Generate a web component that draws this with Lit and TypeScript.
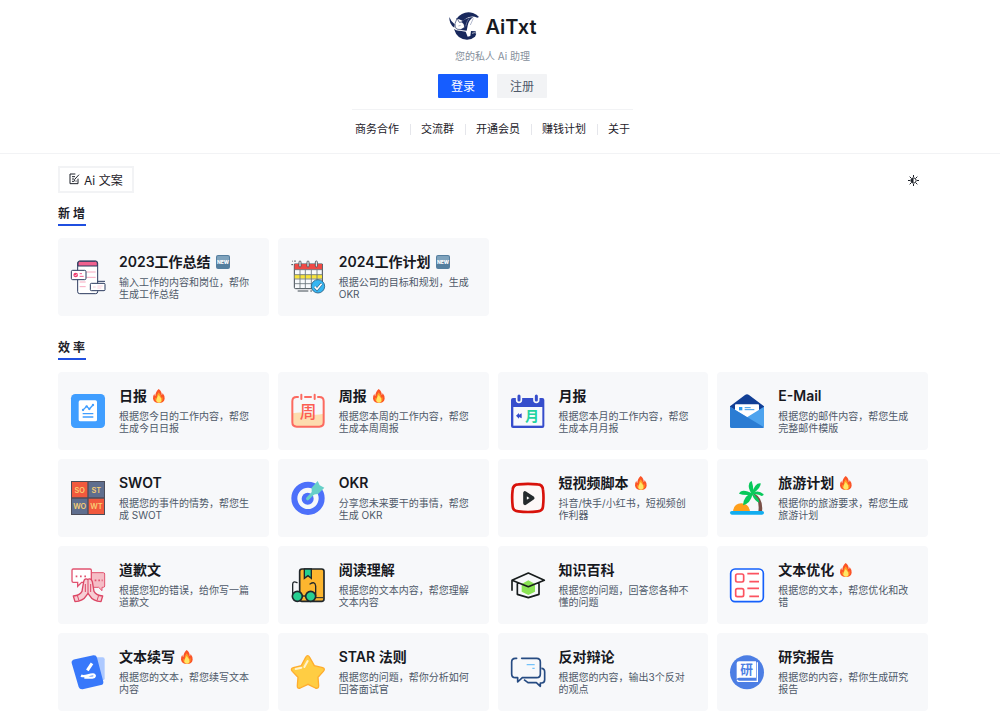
import { LitElement, html, css, svg, nothing } from "lit";
import { customElement, property } from "lit/decorators.js";

type Badge = "new" | "hot" | undefined;
interface Tool {
  icon: string;
  title: string;
  text: string;
  badge?: Badge;
}
interface Section {
  name: string;
  tools: Tool[];
}

const icons: Record<string, unknown> = {
  summary: svg`
    <rect x="20" y="3" width="60" height="98" rx="6" fill="#fff" stroke="#2b3a5e" stroke-width="3"/>
    <path d="M21 18V9q0-5 5-5h48q5 0 5 5v9z" fill="#f0618f" stroke="#2b3a5e" stroke-width="3"/>
    <path d="M46 36h28M46 52h28M26 80h18M26 66h18" stroke="#f8a9c0" stroke-width="3"/>
    <path d="M80 64h22" stroke="#2b3a5e" stroke-width="3"/>
    <rect x="1" y="31" width="44" height="28" rx="4" fill="#fff" stroke="#2b3a5e" stroke-width="3"/>
    <circle cx="14" cy="45" r="7" fill="#ee3f72"/>
    <path d="M11 45l2.500 3 5-6" stroke="#fff" stroke-width="2" fill="none"/>
    <path d="M26 41h7M26 49h12" stroke="#f0618f" stroke-width="3"/>
    <rect x="58" y="70" width="44" height="22" rx="3" fill="#fff" stroke="#2b3a5e" stroke-width="3"/>
    <path d="M66 81h8M79 78h16M79 84h12" stroke="#f8b7ca" stroke-width="2"/>`,
  plan: svg`
    <path d="M10 12h84v70q0 4-4 4H14q-4 0-4-4z" fill="#f8fafc" stroke="#414a52" stroke-width="3"/>
    <path d="M11 12h82v17H11z" fill="#ef4a45"/>
    <path d="M11 44h82v12H11z" fill="#f8e43b"/>
    <path d="M10 29h84M10 44h84M10 57h84M10 71h84M27 29v56M43 29v56M61 29v56M78 29v56" stroke="#69737a" stroke-width="2.500" fill="none"/>
    <g fill="#f8fafc" stroke="#414a52" stroke-width="2.500"><rect x="24" y="3" width="6" height="18" rx="3"/><rect x="48" y="3" width="6" height="18" rx="3"/><rect x="73" y="3" width="6" height="18" rx="3"/></g>
    <path d="M1 14h5M12 1v5M4 3l2 2M20 93h32M58 93h5" stroke="#414a52" stroke-width="3"/>
    <circle cx="81" cy="79" r="20" fill="#35b6f2" stroke="#2c5e80" stroke-width="2.500"/>
    <path d="M71 80l7 8 14-17" fill="none" stroke="#2c5e80" stroke-width="8"/>
    <path d="M71 80l7 8 14-17" fill="none" stroke="#fff" stroke-width="5"/>`,
  daily: svg`
    <rect width="102" height="102" rx="13" fill="#409eff"/>
    <rect x="23" y="19" width="55" height="63" rx="5" fill="#fff"/>
    <path d="M36 48l11-11 8 8 11-12" fill="none" stroke="#409eff" stroke-width="4"/>
    <g fill="#409eff"><circle cx="36" cy="48" r="3.500"/><circle cx="47" cy="37" r="3.500"/><circle cx="55" cy="45" r="3.500"/><circle cx="66" cy="33" r="3.500"/></g>
    <path d="M35 59h32M35 69h32" stroke="#409eff" stroke-width="4"/>`,
  weekly: svg`
    <path d="M5 58q24-5 46 1 22 6 46 0v27q0 12-12 12H17Q5 98 5 86z" fill="#fddcae"/>
    <path d="M21 9h-4Q4 9 4 22v63q0 13 13 13h68q13 0 13-13V22Q98 9 85 9h-4M42 9h18" fill="none" stroke="#fc6a60" stroke-width="6" stroke-linecap="round"/>
    <path d="M31 2v13M71 2v13" stroke="#fc6a60" stroke-width="6" stroke-linecap="round"/>
    <text x="51" y="73" text-anchor="middle" font-size="50" font-weight="500" fill="#fc5d52">周</text>`,
  monthly: svg`
    <path d="M6 12h88q6 0 6 6v78q0 6-6 6H6q-6 0-6-6V18q0-6 6-6z" fill="#364dcc"/>
    <path d="M7 39h87v56H7z" fill="#f8f9fc"/>
    <g fill="#364dcc" stroke="#f7f8fa" stroke-width="5"><rect x="17" y="-1" width="14" height="26" rx="7"/><rect x="69" y="-1" width="14" height="26" rx="7"/></g>
    <path d="M15 65l9-8v5l8-4v15l-8-4v5z" fill="#364dcc"/>
    <text x="63" y="81" text-anchor="middle" font-size="42" font-weight="600" fill="#23d3a0">月</text>`,
  mail: svg`
    <path d="M0 37L45 3q6-5 12 0l45 34v20H0z" fill="#123f96"/>
    <path d="M15 34q0-3 3-3h66q3 0 3 3v50H15z" fill="#fff"/>
    <path d="M0 38l51 32 51-32v59q0 5-5 5H5q-5 0-5-5z" fill="#4da3ee"/>
    <path d="M0 38l102 62q-2 2-5 2H5q-5 0-5-5z" fill="#2b7cd3"/>
    <rect x="27" y="39" width="10" height="10" fill="#2b9af0"/>
    <path d="M44 41h18M44 47h29" stroke="#3b9bea" stroke-width="3"/>`,
  swot: svg`
    <rect width="102" height="102" fill="#4c4d59"/>
    <path d="M3 3h46v46H3zM53 53h46v46H53z" fill="#f1593d"/>
    <path d="M53 3h46v46H53zM3 53h46v46H3z" fill="#5f6e8e"/>
    <g font-size="22" font-weight="600" fill="#f9cf73" text-anchor="middle"><text x="26" y="35">SO</text><text x="76" y="35">ST</text><text x="26" y="84">WO</text><text x="76" y="84">WT</text></g>`,
  okr: svg`
    <circle cx="51" cy="52" r="41" fill="none" stroke="#4d70fa" stroke-width="18"/>
    <circle cx="50" cy="53" r="18" fill="#4d70fa"/>
    <path d="M50 53l27-27" stroke="#67d0c8" stroke-width="10" stroke-linecap="round"/>
    <path d="M62 20L80 0l6 13 14 7-19 19-19 2z" fill="#67d0c8"/>`,
  video: svg`
    <path d="M22 10q29-3 58 0 15 1 16 16 3 24 0 50-1 14-16 15-29 4-58 0Q6 90 5 76q-3-26 0-50Q6 11 22 10z" fill="#fdf8f8" stroke="#d8120b" stroke-width="8"/>
    <path d="M42 36v31l23-16z" fill="#fff" stroke="#252a2d" stroke-width="11" stroke-linejoin="round"/>`,
  palm: svg`
    <path d="M9 91q3-24 25-24t26 24z" fill="#ff9f1c"/>
    <path d="M69 38q21 18 16 54h11q5-39-24-55z" fill="#795047"/>
    <g fill="#08c95b"><path d="M66 40Q52 22 58 6q3-5 7-6 6 16 5 34z"/><path d="M66 36Q75 5 92 7q2 12-23 31z"/><path d="M65 38Q84 24 101 40q-1 5-6 5-12-8-29-4z"/><path d="M69 38Q34 20 27 38q14 6 42 3z"/><path d="M66 36Q41 43 39 73q22-5 29-33z"/><path d="M65 37q24 14 23 28-13-4-22-24z"/></g>
    <rect x="0" y="90" width="102" height="11" rx="5.500" fill="#12adef"/>`,
  sorry: svg`
    <path d="M61 14h36q4 0 4 4v36q0 4-4 4h-4v10l-10-10H61z" fill="#f5bdc6" stroke="#e15370" stroke-width="3"/>
    <path d="M7 3h50q4 0 4 4v32q0 4-4 4H32L20 55V43H7q-4 0-4-4V7q0-4 4-4z" fill="#fff" stroke="#e15370" stroke-width="4"/>
    <path d="M14 25h5M27 25h5M40 25h5M71 37h5M82 37h5M92 37h3" stroke="#e15370" stroke-width="5"/>
    <path d="M50 34q-9-5-12 7L33 70q-7 12-26 14l5 17q24-1 34-18l5-7 5 7q10 17 34 18l5-17q-19-2-26-14l-5-29q-4-12-14-7z" fill="#f7cdd4" stroke="#dc4765" stroke-width="4" stroke-linejoin="round"/>
    <path d="M51 36v40M43 48v24M59 48v24" stroke="#dc4765" stroke-width="3"/>
    <path d="M19 82l5 16M83 82l-5 16" stroke="#dc4765" stroke-width="3"/>`,
  book: svg`
    <rect x="26" y="3" width="73" height="97" rx="7" fill="#fdb62f" stroke="#20272b" stroke-width="5"/>
    <path d="M70 89h27" stroke="#20272b" stroke-width="3"/>
    <path d="M40 3h21v28l-10-8-11 8z" fill="#27cf91" stroke="#20272b" stroke-width="4"/>
    <path d="M5 80V49q0-11 13-5M57 48q15-10 17 6v30" fill="none" stroke="#20272b" stroke-width="4" stroke-linecap="round"/>
    <path d="M31 84h16" stroke="#20272b" stroke-width="4"/>
    <circle cx="19" cy="85" r="15" fill="#27cf91" stroke="#20272b" stroke-width="5"/>
    <circle cx="59" cy="85" r="15" fill="#27cf91" stroke="#20272b" stroke-width="5"/>`,
  cap: svg`
    <path d="M32 48l20-11 20 11v23L52 81 32 71z" fill="#8be354"/>
    <path d="M3 37l49-22 48 22-48 19zM19 46v33l33 10 32-10V46M3 37v31" fill="none" stroke="#171c1c" stroke-width="5" stroke-linejoin="round"/>`,
  list: svg`
    <rect x="2" y="3" width="98" height="98" rx="13" fill="#fff" stroke="#1560fb" stroke-width="5"/>
    <g fill="#fff" stroke="#fc5360" stroke-width="5"><rect x="17" y="18" width="24" height="24" rx="5"/><rect x="17" y="62" width="24" height="24" rx="5"/></g>
    <path d="M52 17h35M58 41h29M52 61h35M58 85h29" stroke="#fc5360" stroke-width="5"/>`,
  write: svg`
    <rect x="69" y="7" width="32" height="69" rx="6" fill="#adc9ff"/>
    <path d="M12 13L67 1q9-1 11 7l19 72q1 8-7 10L35 103q-9 1-12-7L2 24Q0 16 12 13z" fill="#3878fa"/>
    <path d="M63 25L49 46" stroke="#fff" stroke-width="9"/>
    <path d="M30 62c12 6 24-5 36-4 8 1 7 9-2 10H40" fill="none" stroke="#fff" stroke-width="7"/>`,
  star: svg`
    <path d="M44 7q6-10 12 0l14 25 25 6q9 3 2 11L81 67l2 25q0 10-10 7L51 88 28 99q-10 3-9-7l2-25L4 49q-7-8 3-11l24-6z" fill="#ffcd43" stroke="#ffad2e" stroke-width="4"/>
    <path d="M50 18l-10 18M31 38l-17 4" stroke="#fff3cd" stroke-width="6" stroke-linecap="round"/>`,
  chat: svg`
    <path d="M17 10h-4Q2 10 2 21v36q0 11 11 11h7v13l14-13h43q11 0 11-11V21Q88 10 77 10H32" fill="none" stroke="#264b82" stroke-width="5" stroke-linejoin="round" stroke-linecap="round"/>
    <path d="M91 40q10 0 10 11v23q0 9-9 10h-4v10L76 83H51L39 74" fill="none" stroke="#264b82" stroke-width="5" stroke-linejoin="round"/>
    <path d="M47 29h24M64 40h7" stroke="#74c2fa" stroke-width="4"/>`,
  research: svg`
    <circle cx="51" cy="52" r="51" fill="#4c7ee4"/>
    <path d="M31 19h47v49H28q-5 0-8 4V25q0-6 7-6z" fill="#fff"/>
    <path d="M82 22v57H28q-6 0-6-5" fill="none" stroke="#fff" stroke-width="4"/>
    <text x="50" y="57" text-anchor="middle" font-size="38" font-weight="600" fill="#4c7ee4">研</text>`,
};

const sections: Section[] = [
  {
    name: "新 增",
    tools: [
      { icon: "summary", title: "2023工作总结", text: "输入工作的内容和岗位，帮你生成工作总结", badge: "new" },
      { icon: "plan", title: "2024工作计划", text: "根据公司的目标和规划，生成 OKR", badge: "new" },
    ],
  },
  {
    name: "效 率",
    tools: [
      { icon: "daily", title: "日报", text: "根据您今日的工作内容，帮您生成今日日报", badge: "hot" },
      { icon: "weekly", title: "周报", text: "根据您本周的工作内容，帮您生成本周周报", badge: "hot" },
      { icon: "monthly", title: "月报", text: "根据您本月的工作内容，帮您生成本月月报" },
      { icon: "mail", title: "E-Mail", text: "根据您的邮件内容，帮您生成完整邮件模版" },
      { icon: "swot", title: "SWOT", text: "根据您的事件的情势，帮您生成 SWOT" },
      { icon: "okr", title: "OKR", text: "分享您未来要干的事情，帮您生成 OKR" },
      { icon: "video", title: "短视频脚本", text: "抖音/快手/小红书，短视频创作利器", badge: "hot" },
      { icon: "palm", title: "旅游计划", text: "根据你的旅游要求，帮您生成旅游计划", badge: "hot" },
      { icon: "sorry", title: "道歉文", text: "根据您犯的错误，给你写一篇道歉文" },
      { icon: "book", title: "阅读理解", text: "根据您的文本内容，帮您理解文本内容" },
      { icon: "cap", title: "知识百科", text: "根据您的问题，回答您各种不懂的问题" },
      { icon: "list", title: "文本优化", text: "根据您的文本，帮您优化和改错", badge: "hot" },
      { icon: "write", title: "文本续写", text: "根据您的文本，帮您续写文本内容", badge: "hot" },
      { icon: "star", title: "STAR 法则", text: "根据您的问题，帮你分析如何回答面试官" },
      { icon: "chat", title: "反对辩论", text: "根据您的内容，输出3个反对的观点" },
      { icon: "research", title: "研究报告", text: "根据您的内容，帮你生成研究报告" },
    ],
  },
];

@customElement("tool-card")
export class ToolCard extends LitElement {
  @property({ attribute: false }) tool!: Tool;

  static styles = css`
    :host { display: block; }
    .card {
      box-sizing: border-box;
      height: 100%;
      display: flex;
      align-items: center;
      gap: 14px;
      padding: 14px 12px 14px 13px;
      border-radius: 4px;
      background: #f7f8fa;
      color: inherit;
      text-decoration: none;
    }
    .icon { flex: none; width: 34px; height: 34px; overflow: visible; }
    .body { flex: 1; min-width: 0; max-width: 134px; padding-bottom: 2px; }
    .title {
      display: flex;
      align-items: center;
      gap: 5px;
      margin: 0 0 4px;
      font-size: 14px;
      line-height: 20px;
      font-weight: 600;
      color: #17191f;
      white-space: nowrap;
    }
    .badge { flex: none; width: 14px; height: 14px; }
    .text { margin: 0; font-size: 10px; line-height: 12px; color: #4e5969; }
  `;

  private badge(kind: Badge) {
    if (kind === "new")
      return html`<svg class="badge" viewBox="0 0 42 42" role="img" aria-label="NEW">
        <rect width="42" height="42" rx="6" fill="#557f9f"/>
        <rect x="3" y="3" width="36" height="17" rx="4" fill="#7fa3bd"/>
        <text x="21" y="26" text-anchor="middle" font-size="15" font-weight="800" fill="#fff">NEW</text>
      </svg>`;
    if (kind === "hot")
      return html`<svg class="badge" viewBox="0 0 42 42" aria-hidden="true">
        <path d="M20 0q10 8 9 18 3-2 3-6 7 9 6 17-2 13-17 13T3 29q-1-8 4-15 0 5 3 7Q10 9 20 0z" fill="#fb5427"/>
        <path d="M20 10q8 8 7 17 3-1 4-4 4 16-10 18Q7 40 10 25q1 4 4 4-2-10 6-19z" fill="#ff9f24"/>
        <path d="M20 18q9 9 8 17-1 6-7 6t-8-6q0-8 7-17z" fill="#ffe666"/>
      </svg>`;
    return nothing;
  }

  render() {
    const t = this.tool;
    return html`<a class="card" href="#${t.icon}">
      <svg class="icon" viewBox="0 0 102 102" aria-hidden="true">${icons[t.icon]}</svg>
      <div class="body">
        <h3 class="title">${t.title}${this.badge(t.badge)}</h3>
        <p class="text">${t.text}</p>
      </div>
    </a>`;
  }
}

@customElement("app-root")
export class AppRoot extends LitElement {
  static styles = css`
    :host {
      display: block;
      background: #fff;
      color: #1d2129;
      font-family: Inter, "Noto Sans CJK SC", sans-serif;
      font-size: 12px;
    }
    .header {
      display: flex;
      flex-direction: column;
      align-items: center;
      padding: 11px 15px 14px 0;
      border-bottom: 1px solid #f2f3f5;
    }
    .brand { display: flex; align-items: center; gap: 5px; }
    .logo { width: 32px; height: 32px; }
    .name { margin: 0; font-size: 20px; line-height: 32px; font-weight: 600; color: #17191f; }
    .slogan { margin: 5px 0 0; font-size: 10px; line-height: 16px; color: #86909c; }
    .actions { display: flex; gap: 9px; margin: 10px 0 11px; }
    .btn {
      height: 24px;
      padding: 0 13px 2px;
      border: 0;
      border-radius: 1px;
      font: inherit;
      background: #f2f3f5;
      color: #4e5969;
    }
    .btn.primary { background: #165dff; color: #fff; }
    .nav {
      display: flex;
      align-items: center;
      gap: 11px;
      padding: 10px 3px 1px;
      border-top: 1px solid #f2f3f5;
    }
    .link { font-size: 11px; line-height: 18px; color: #1d2129; text-decoration: none; }
    .sep { width: 1px; height: 11px; margin-right: -1px; background: #e5e6eb; }
    .main { padding: 12px 72px 8px 58px; }
    .bar { display: flex; align-items: center; justify-content: space-between; }
    .tab {
      display: flex;
      align-items: center;
      gap: 4px;
      height: 27px;
      padding: 0 9px 1px;
      border: 2px solid #f2f3f5;
      background: #fff;
      color: #1d2129;
      font: inherit;
    }
    .tab-icon { width: 11px; height: 12px; }
    .theme { display: flex; padding: 0; margin: 2px 9px 0 0; border: 0; background: none; }
    .theme-icon { width: 11px; height: 11px; }
    .section { margin: 12px 0 23px; }
    .section:last-child { margin: 0; }
    .heading {
      width: max-content;
      margin: 0 0 12px;
      padding: 0 1px 1px 0;
      border-bottom: 2px solid #1f4fe0;
      font-size: 12px;
      line-height: 18px;
      font-weight: 600;
    }
    .grid { display: grid; grid-template-columns: repeat(4, minmax(0, 1fr)); gap: 9px; }
  `;

  render() {
    const links = ["商务合作", "交流群", "开通会员", "赚钱计划", "关于"];
    return html`
      <header class="header">
        <div class="brand">
          <svg class="logo" viewBox="0 0 96 96" aria-hidden="true">
            <path d="M22 24Q42-2 72 6q12 4 18 12l-5 2q-18-8-33 2l-10 8-12-5z" fill="#18285c"/>
            <path d="M1 18q4 12 16 22l-1 10Q0 40 1 18z" fill="#18285c"/>
            <path d="M15 54q8 6 18 5l17 3 6 15 8-2 2-15 14 1q4 7-2 16-10 9-24 9-30-1-39-32z" fill="#18285c"/>
            <path d="M37 33q14-13 36-15-14 9-17 26l-3 15-18-2z" fill="#18285c"/>
            <path d="M18 38l6-16 7 12 8-1q9 7 8 16-12 10-20 6-9 0-9-17z" fill="#fff" stroke="#18285c" stroke-width="2"/>
            <path d="M28 45l7-2M60 22q-8 12-10 24M73 22l-9 20" fill="none" stroke="#8d96b3" stroke-width="2"/>
            <path d="M69 67q8-4 15 0" fill="none" stroke="#fff" stroke-width="2"/>
          </svg>
          <h1 class="name">AiTxt</h1>
        </div>
        <p class="slogan">您的私人 Ai 助理</p>
        <div class="actions">
          <button class="btn primary">登录</button>
          <button class="btn">注册</button>
        </div>
        <nav class="nav">
          ${links.map((l, i) => html`${i ? html`<span class="sep"></span>` : nothing}<a class="link" href="#">${l}</a>`)}
        </nav>
      </header>
      <main class="main">
        <div class="bar">
          <button class="tab">
            <svg class="tab-icon" viewBox="0 0 33 36" fill="none" stroke="#1d2129" stroke-width="3" aria-hidden="true">
              <path d="M19 3H3v29h24V17M9 11h9M9 18h6M9 25h7M30 5L17 19v5M20 25l3-1"/>
            </svg>
            Ai 文案
          </button>
          <button class="theme" aria-label="切换主题">
            <svg class="theme-icon" viewBox="0 0 33 33" aria-hidden="true">
              <path d="M16.500 0v6M16.500 27v6M0 16.500h6M27 16.500h6M5 5l4 4M24 24l4 4M28 5l-4 4M9 24l-4 4" stroke="#1d2129" stroke-width="3"/>
              <circle cx="16.500" cy="16.500" r="8" fill="#fff" stroke="#1d2129" stroke-width="3"/>
              <path d="M16.500 9a7.500 7.500 0 0 0 0 15z" fill="#1d2129"/>
            </svg>
          </button>
        </div>
        ${sections.map(
          (s) => html`<section class="section">
            <h2 class="heading">${s.name}</h2>
            <div class="grid">${s.tools.map((t) => html`<tool-card .tool=${t}></tool-card>`)}</div>
          </section>`
        )}
      </main>
    `;
  }
}
